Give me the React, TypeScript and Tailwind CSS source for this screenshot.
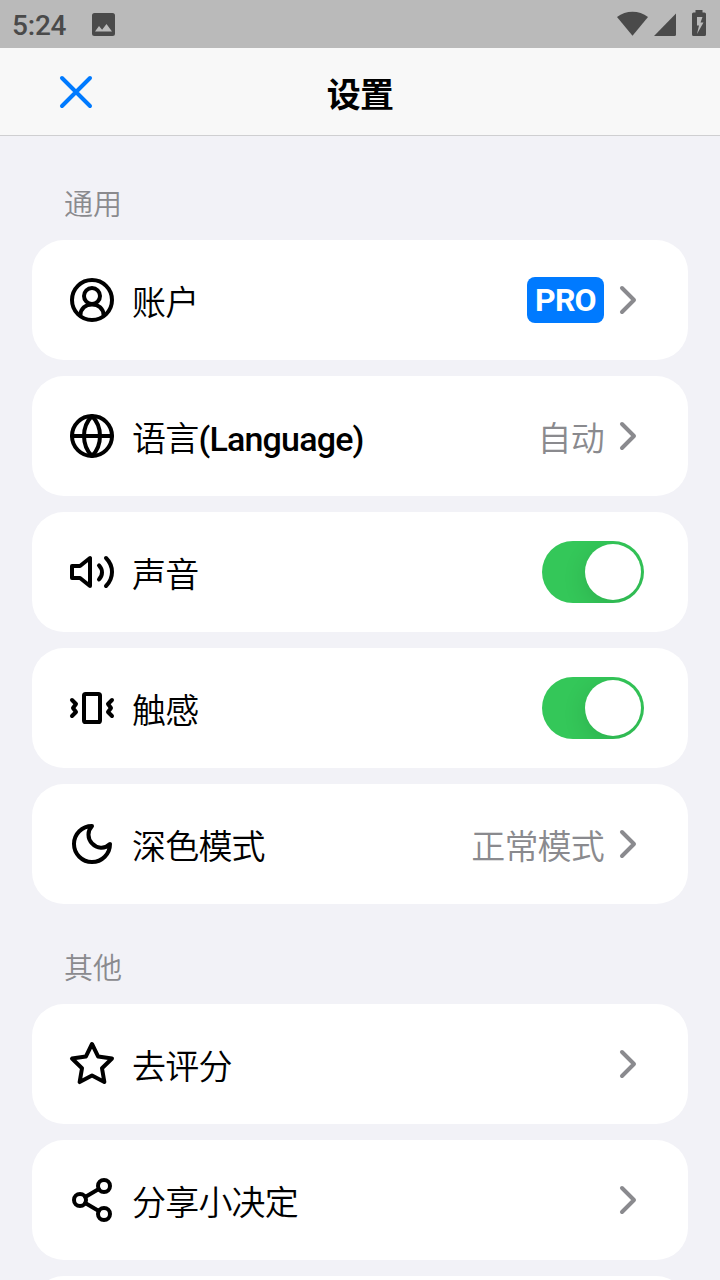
import type { ReactNode } from "react";

function Icon({ children, className = "" }: { children: ReactNode; className?: string }) {
  return (
    <svg
      viewBox="0 0 24 24"
      className={`size-12 shrink-0 fill-none stroke-2 ${className}`}
      stroke="currentColor"
      strokeLinecap="round"
      strokeLinejoin="round"
    >
      {children}
    </svg>
  );
}

const icons = {
  account: (
    <Icon>
      <circle cx="12" cy="12" r="10" />
      <circle cx="12" cy="10" r="4" />
      <path d="M6.200 19.600C6.300 16.300 8.800 14.200 12 14.200s5.700 2.100 5.800 5.400" />
    </Icon>
  ),
  globe: (
    <Icon>
      <circle cx="12" cy="12" r="10" />
      <path d="M2 12h20" />
      <path d="M12 2C9.6 4.4 8 8 8 12s1.6 7.6 4 10c2.4-2.4 4-6 4-10s-1.6-7.600-4-10z" />
    </Icon>
  ),
  sound: (
    <Icon>
      <path d="M2 9h4l5-4v14l-5-4H2z" />
      <path d="M15.500 8.700c2 2.200 2 4.800 0 7" />
      <path d="M19 5c4 4 4 10 0 14" />
    </Icon>
  ),
  haptic: (
    <Icon>
      <rect x="8" y="5" width="8" height="14" rx="0.8" />
      <path d="M2 8l2 2-1.500 2 1.500 2-2 2" />
      <path d="M22 8l-2 2 1.500 2-1.500 2 2 2" />
    </Icon>
  ),
  moon: (
    <Icon>
      <path d="M12 3C9.600 5.500 9.700 9.200 12 11.700c2.400 2.600 6.300 3 9 .3a9 9 0 1 1-9-9z" />
    </Icon>
  ),
  star: (
    <Icon>
      <path d="M12 2l3.090 6.260L22 9.270l-5 4.870 1.180 6.880L12 17.770l-6.180 3.250L7 14.140 2 9.270l6.910-1.010z" />
    </Icon>
  ),
  share: (
    <Icon>
      <circle cx="18" cy="5" r="3" />
      <circle cx="6" cy="12" r="3" />
      <circle cx="18" cy="19" r="3" />
      <path d="M8.590 13.510l6.830 3.980M15.410 6.510l-6.820 3.980" />
    </Icon>
  ),
};

function Chevron() {
  return (
    <Icon className="text-[#8a8a8e]">
      <path d="M9 6l6 6-6 6" />
    </Icon>
  );
}

function Toggle() {
  return (
    <button role="switch" aria-checked="true" className="mr-2 flex h-[62px] w-[102px] items-center justify-end overflow-hidden rounded-full bg-[#34c759] pr-[3px]">
      <span className="size-14 rounded-full bg-white shadow-[0_6px_24px_rgba(0,0,0,0.12)]" />
    </button>
  );
}

function Row({ icon, label, children }: { icon: ReactNode; label: ReactNode; children?: ReactNode }) {
  return (
    <div className="flex h-[120px] shrink-0 items-center rounded-[32px] bg-white px-9 text-black">
      {icon}
      <span className="ml-4 flex-1 pt-[6px] text-[34px] leading-10 tracking-[-0.8px]">{label}</span>
      {children}
    </div>
  );
}

function Value({ children }: { children: ReactNode }) {
  return <span className="pt-[6px] text-[34px] leading-10 tracking-[-0.8px] text-[#8a8a8e]">{children}</span>;
}

function Heading({ children }: { children: ReactNode }) {
  return <h2 className="pl-8 text-[29px] leading-10 text-[#8a8a8e]">{children}</h2>;
}

function StatusBar() {
  return (
    <div className="flex h-12 shrink-0 items-center bg-[#bababa] pl-3 text-[#4a4a4a]">
      <span className="w-[55px] pt-1 text-[28px] font-medium leading-none tracking-[-0.2px]">5:24</span>
      <svg viewBox="0 0 23 23" className="ml-[25px] size-[23px] fill-current">
        <path fillRule="evenodd" d="M2.500 0h18A2.500 2.500 0 0 1 23 2.500v18a2.500 2.500 0 0 1-2.500 2.500h-18A2.500 2.500 0 0 1 0 20.500v-18A2.500 2.500 0 0 1 2.500 0zM3 18.500h17L14.500 11l-4.400 5.700L7 13z" />
      </svg>
      <svg viewBox="0 0 104 48" className="ml-auto h-12 w-[104px] fill-current">
        <path d="M1 17C10 10 23 10 32 17L16.500 35.700z" />
        <path d="M38 36L60 13.500v21a1.500 1.500 0 0 1-1.500 1.500z" />
        <path fillRule="evenodd" d="M79.500 10h7v2.500h2a1.500 1.500 0 0 1 1.500 1.500v20.500a1.500 1.500 0 0 1-1.500 1.500H77.500a1.500 1.500 0 0 1-1.500-1.500V14a1.500 1.500 0 0 1 1.500-1.500h2zM81 17v8.500h2L81 34 87.500 22.500h-3l2-5.500z" />
      </svg>
    </div>
  );
}

export default function App() {
  return (
    <div className="flex h-[1280px] w-[720px] flex-col overflow-hidden bg-[#f2f2f7] font-[Roboto,'Noto_Sans_CJK_SC',sans-serif]" lang="zh-CN">
      <StatusBar />
      <header className="grid h-[88px] shrink-0 grid-cols-[1fr_auto_1fr] items-center border-b border-[#cfcfd1] bg-[#f8f8f8]">
        <button aria-label="关闭" className="ml-[52px] flex w-12 text-[#007aff]">
          <Icon>
            <path d="M5 5l14 14M19 5L5 19" />
          </Icon>
        </button>
        <h1 className="pt-[7px] text-[34px] font-bold leading-10 tracking-[-0.8px] text-black">设置</h1>
      </header>
      <main className="flex flex-col px-8 pt-[49px] font-[Roboto,'Noto_Sans_CJK_SC_DemiLight','Noto_Sans_CJK_SC',sans-serif]">
        <Heading>通用</Heading>
        <section className="mt-[15px] flex flex-col gap-4">
          <Row icon={icons.account} label="账户">
            <span className="flex h-[46px] w-[77px] items-center justify-center rounded-lg bg-[#007aff] text-[32px] font-bold leading-none tracking-[-0.8px] text-white">PRO</span>
            <Chevron />
          </Row>
          <Row icon={icons.globe} label={<>语言<span className="font-medium">(Language)</span></>}>
            <Value>自动</Value>
            <Chevron />
          </Row>
          <Row icon={icons.sound} label="声音"><Toggle /></Row>
          <Row icon={icons.haptic} label="触感"><Toggle /></Row>
          <Row icon={icons.moon} label="深色模式">
            <Value>正常模式</Value>
            <Chevron />
          </Row>
        </section>
        <div className="mt-[45px]"><Heading>其他</Heading></div>
        <section className="mt-[15px] flex flex-col gap-4">
          <Row icon={icons.star} label="去评分"><Chevron /></Row>
          <Row icon={icons.share} label="分享小决定"><Chevron /></Row>
          <div className="h-[120px] rounded-[32px] bg-white" />
        </section>
      </main>
    </div>
  );
}
